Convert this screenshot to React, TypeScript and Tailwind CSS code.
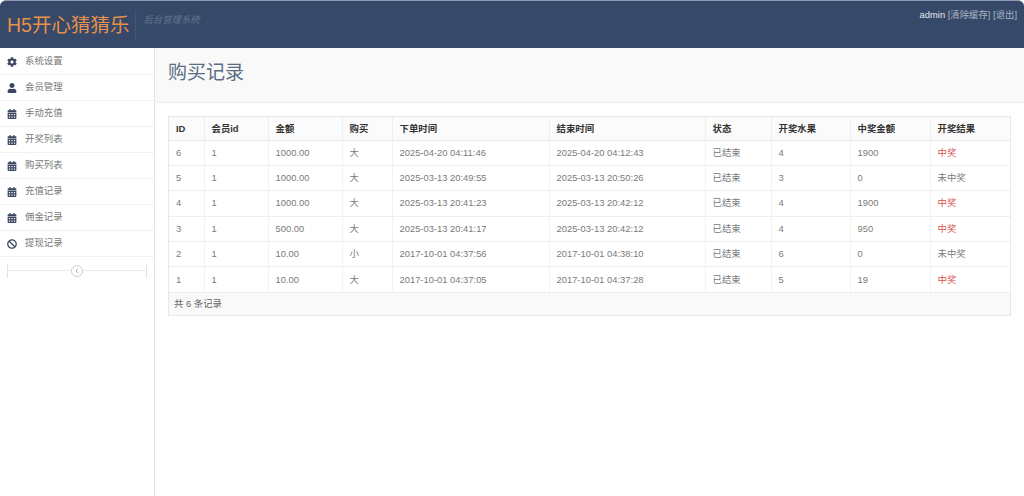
import { FaCog, FaUser, FaCalendarAlt, FaBan } from "react-icons/fa";
import { ChevronLeft } from "lucide-react";

const menu = [
  { label: "系统设置", icon: FaCog },
  { label: "会员管理", icon: FaUser },
  { label: "手动充值", icon: FaCalendarAlt },
  { label: "开奖列表", icon: FaCalendarAlt },
  { label: "购买列表", icon: FaCalendarAlt },
  { label: "充值记录", icon: FaCalendarAlt },
  { label: "佣金记录", icon: FaCalendarAlt },
  { label: "提现记录", icon: FaBan },
];

const columns = [
  { title: "ID", width: "w-[35px]" },
  { title: "会员id", width: "w-[64px]" },
  { title: "金额", width: "w-[74px]" },
  { title: "购买", width: "w-[50px]" },
  { title: "下单时间", width: "w-[157px]" },
  { title: "结束时间", width: "w-[156px]" },
  { title: "状态", width: "w-[66px]" },
  { title: "开奖水果", width: "w-[79px]" },
  { title: "中奖金额", width: "w-[80px]" },
  { title: "开奖结果", width: "w-[80px]" },
];

const rows = [
  ["6", "1", "1000.00", "大", "2025-04-20 04:11:46", "2025-04-20 04:12:43", "已结束", "4", "1900", "中奖"],
  ["5", "1", "1000.00", "大", "2025-03-13 20:49:55", "2025-03-13 20:50:26", "已结束", "3", "0", "未中奖"],
  ["4", "1", "1000.00", "大", "2025-03-13 20:41:23", "2025-03-13 20:42:12", "已结束", "4", "1900", "中奖"],
  ["3", "1", "500.00", "大", "2025-03-13 20:41:17", "2025-03-13 20:42:12", "已结束", "4", "950", "中奖"],
  ["2", "1", "10.00", "小", "2017-10-01 04:37:56", "2017-10-01 04:38:10", "已结束", "6", "0", "未中奖"],
  ["1", "1", "10.00", "大", "2017-10-01 04:37:05", "2017-10-01 04:37:28", "已结束", "5", "19", "中奖"],
];

export default function App() {
  return (
    <div className="h-[496px] w-[1024px] overflow-hidden bg-white font-['Liberation_Sans','Noto_Sans_CJK_SC',sans-serif] text-[9.4px] text-[#7a7a7a]">
      {/* Top bar */}
      <header className="flex h-[48px] items-start justify-between rounded-t-[6px] border-t border-[#8f9bb0] bg-[#364968]">
        <div className="flex items-center pl-[7px] pt-[9px]">
          <span className="text-[19.5px] leading-[30px] text-[#e8914a]">H5开心猜猜乐</span>
          <span className="ml-[6px] h-[30px] border-l border-[#43567a]" />
          <span className="ml-[7px] -mt-[9px] text-[9.4px] italic text-[#64748f]">后台管理系统</span>
        </div>
        <div className="pr-[7px] pt-[9px] text-[9.4px] leading-[10px] text-[#a9b4c6]">
          <span className="text-[#e4e8ef]">admin</span> [清除缓存] [退出]
        </div>
      </header>

      <div className="flex h-[448px]">
        {/* Sidebar */}
        <aside className="w-[155px] shrink-0 border-r border-[#e3e3e3] pt-[1px]">
          <ul>
            {menu.map((item) => (
              <li key={item.label} className="flex h-[26px] items-center border-b border-[#f1f1f1] pl-[7px] text-[#777777]">
                <item.icon className="h-[10px] w-[10px] text-[#3a4660]" />
                <span className="ml-[8px]">{item.label}</span>
              </li>
            ))}
          </ul>
          <div className="relative mx-[7px] mt-[7px] flex h-[14px] items-center justify-center border-x border-[#e3e3e3]">
            <div className="absolute inset-x-0 top-[6px] border-t border-[#ececec]" />
            <div className="relative flex h-[12px] w-[12px] items-center justify-center rounded-full border border-[#cfcfcf] bg-white">
              <ChevronLeft className="h-[8px] w-[8px] text-[#888888]" />
            </div>
          </div>
        </aside>

        {/* Main */}
        <main className="min-w-0 flex-1">
          <div className="flex h-[55px] items-center border-b border-[#ececec] bg-[#f9f9f9] pb-[3px] pl-[13px]">
            <h1 className="text-[19px] font-normal text-[#5b6b84]">购买记录</h1>
          </div>
          <div className="pl-[13px] pt-[13px]">
            <div className="w-[843px] border border-[#e8e8e8]">
              <table className="w-full table-fixed border-collapse">
                <thead>
                  <tr className="h-[23px] border-b border-[#e8e8e8] bg-[#fbfbfb]">
                    {columns.map((col, i) => (
                      <th
                        key={col.title}
                        className={`${col.width} ${i === 0 ? "" : "border-l"} border-[#eeeeee] pl-[7px] pt-[1px] text-left font-bold text-[#333333]`}
                      >
                        {col.title}
                      </th>
                    ))}
                  </tr>
                </thead>
                <tbody>
                  {rows.map((row) => (
                    <tr key={row[0]} className="h-[25.4px] border-b border-[#eeeeee]">
                      {row.map((cell, i) => (
                        <td
                          key={i}
                          className={`${i === 0 ? "" : "border-l"} border-[#f2f2f2] pl-[7px] ${cell === "中奖" ? "text-[#d9534f]" : ""}`}
                        >
                          {cell}
                        </td>
                      ))}
                    </tr>
                  ))}
                </tbody>
              </table>
              <div className="flex h-[22px] items-center bg-[#f9f9f9] pl-[5px] text-[#666666]">共 6 条记录</div>
            </div>
          </div>
        </main>
      </div>
    </div>
  );
}
